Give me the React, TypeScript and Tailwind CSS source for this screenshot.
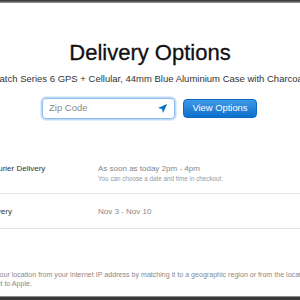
import React from "react";

const font = { fontFamily: '"Liberation Sans", Arial, sans-serif' };

function LocationArrow() {
  return (
    <svg width="11" height="11" viewBox="0 0 24 24" aria-hidden="true">
      <polygon points="2,11 22,2 13,22 11,13" fill="#0070c9" />
    </svg>
  );
}

export default function App() {
  return (
    <div
      className="w-[300px] h-[300px] overflow-hidden bg-white flex flex-col"
      style={font}
    >
      <div className="h-[3px] shrink-0 bg-gradient-to-b from-[#2b2b2b] to-[#9a9a9a]" />

      <div className="mt-[37px] h-[26px] leading-[26px] text-[22px] text-[#111] text-center whitespace-nowrap [-webkit-text-stroke:0.3px_#111]">
        Delivery Options
      </div>

      <div className="mt-[7px] h-[12px] leading-[12px] text-[9.5px] text-[#333] whitespace-nowrap -ml-[36px]">
        Apple Watch Series 6 GPS + Cellular, 44mm Blue Aluminium Case with Charcoal Sport Band
      </div>

      <div className="mt-[13px] flex items-center justify-center gap-[8px] pr-[1px]">
        <div className="w-[133px] h-[21px] rounded-[4px] border border-[#8dbcef] shadow-[0_0_0_1.5px_rgba(141,188,239,0.55)] flex items-center justify-between pl-[6px] pr-[6px]">
          <span className="text-[9.5px] text-[#8a8a8a]">Zip Code</span>
          <LocationArrow />
        </div>
        <button className="w-[74px] h-[19px] rounded-[4px] bg-gradient-to-b from-[#3d9ae8] to-[#0a6fcc] border border-[#0b6bc4] text-white text-[9.4px] flex items-center justify-center">
          View Options
        </button>
      </div>

      <div className="mt-[45px] flex -ml-[12px]">
        <div className="w-[110px] shrink-0 h-[10px] leading-[10px] text-[8px] text-[#333] whitespace-nowrap">
          Courier Delivery
        </div>
        <div className="flex flex-col">
          <div className="h-[10px] leading-[10px] text-[8px] text-[#86868b] whitespace-nowrap">
            As soon as today 2pm - 4pm
          </div>
          <div className="mt-[1px] h-[8px] leading-[8px] text-[6.3px] text-[#9a9a9a] whitespace-nowrap">
            You can choose a date and time in checkout.
          </div>
        </div>
      </div>

      <div className="mt-[10px] h-px bg-[#e3e3e3]" />

      <div className="mt-[13px] flex -ml-[12px]">
        <div className="w-[110px] shrink-0 h-[10px] leading-[10px] text-[8px] text-[#333] whitespace-nowrap">
          <span className="-ml-[5px]">Delivery</span>
        </div>
        <div className="h-[10px] leading-[10px] text-[8px] text-[#86868b] whitespace-nowrap">
          Nov 3 - Nov 10
        </div>
      </div>

      <div className="mt-[11px] h-px bg-[#e3e3e3]" />

      <div className="mt-[42px] text-[7.1px] leading-[9px] text-[#888] whitespace-nowrap">
        <div className="-ml-[4px]">
          your location from your internet IP address by matching it to a geographic region or from the location you entered previously.
        </div>
        <div className="-ml-[11px]">sent to Apple.</div>
      </div>

      <div className="mt-auto h-[4px] shrink-0 border-t border-[#8a8a8a] bg-[#3a3a3a]" />
    </div>
  );
}
